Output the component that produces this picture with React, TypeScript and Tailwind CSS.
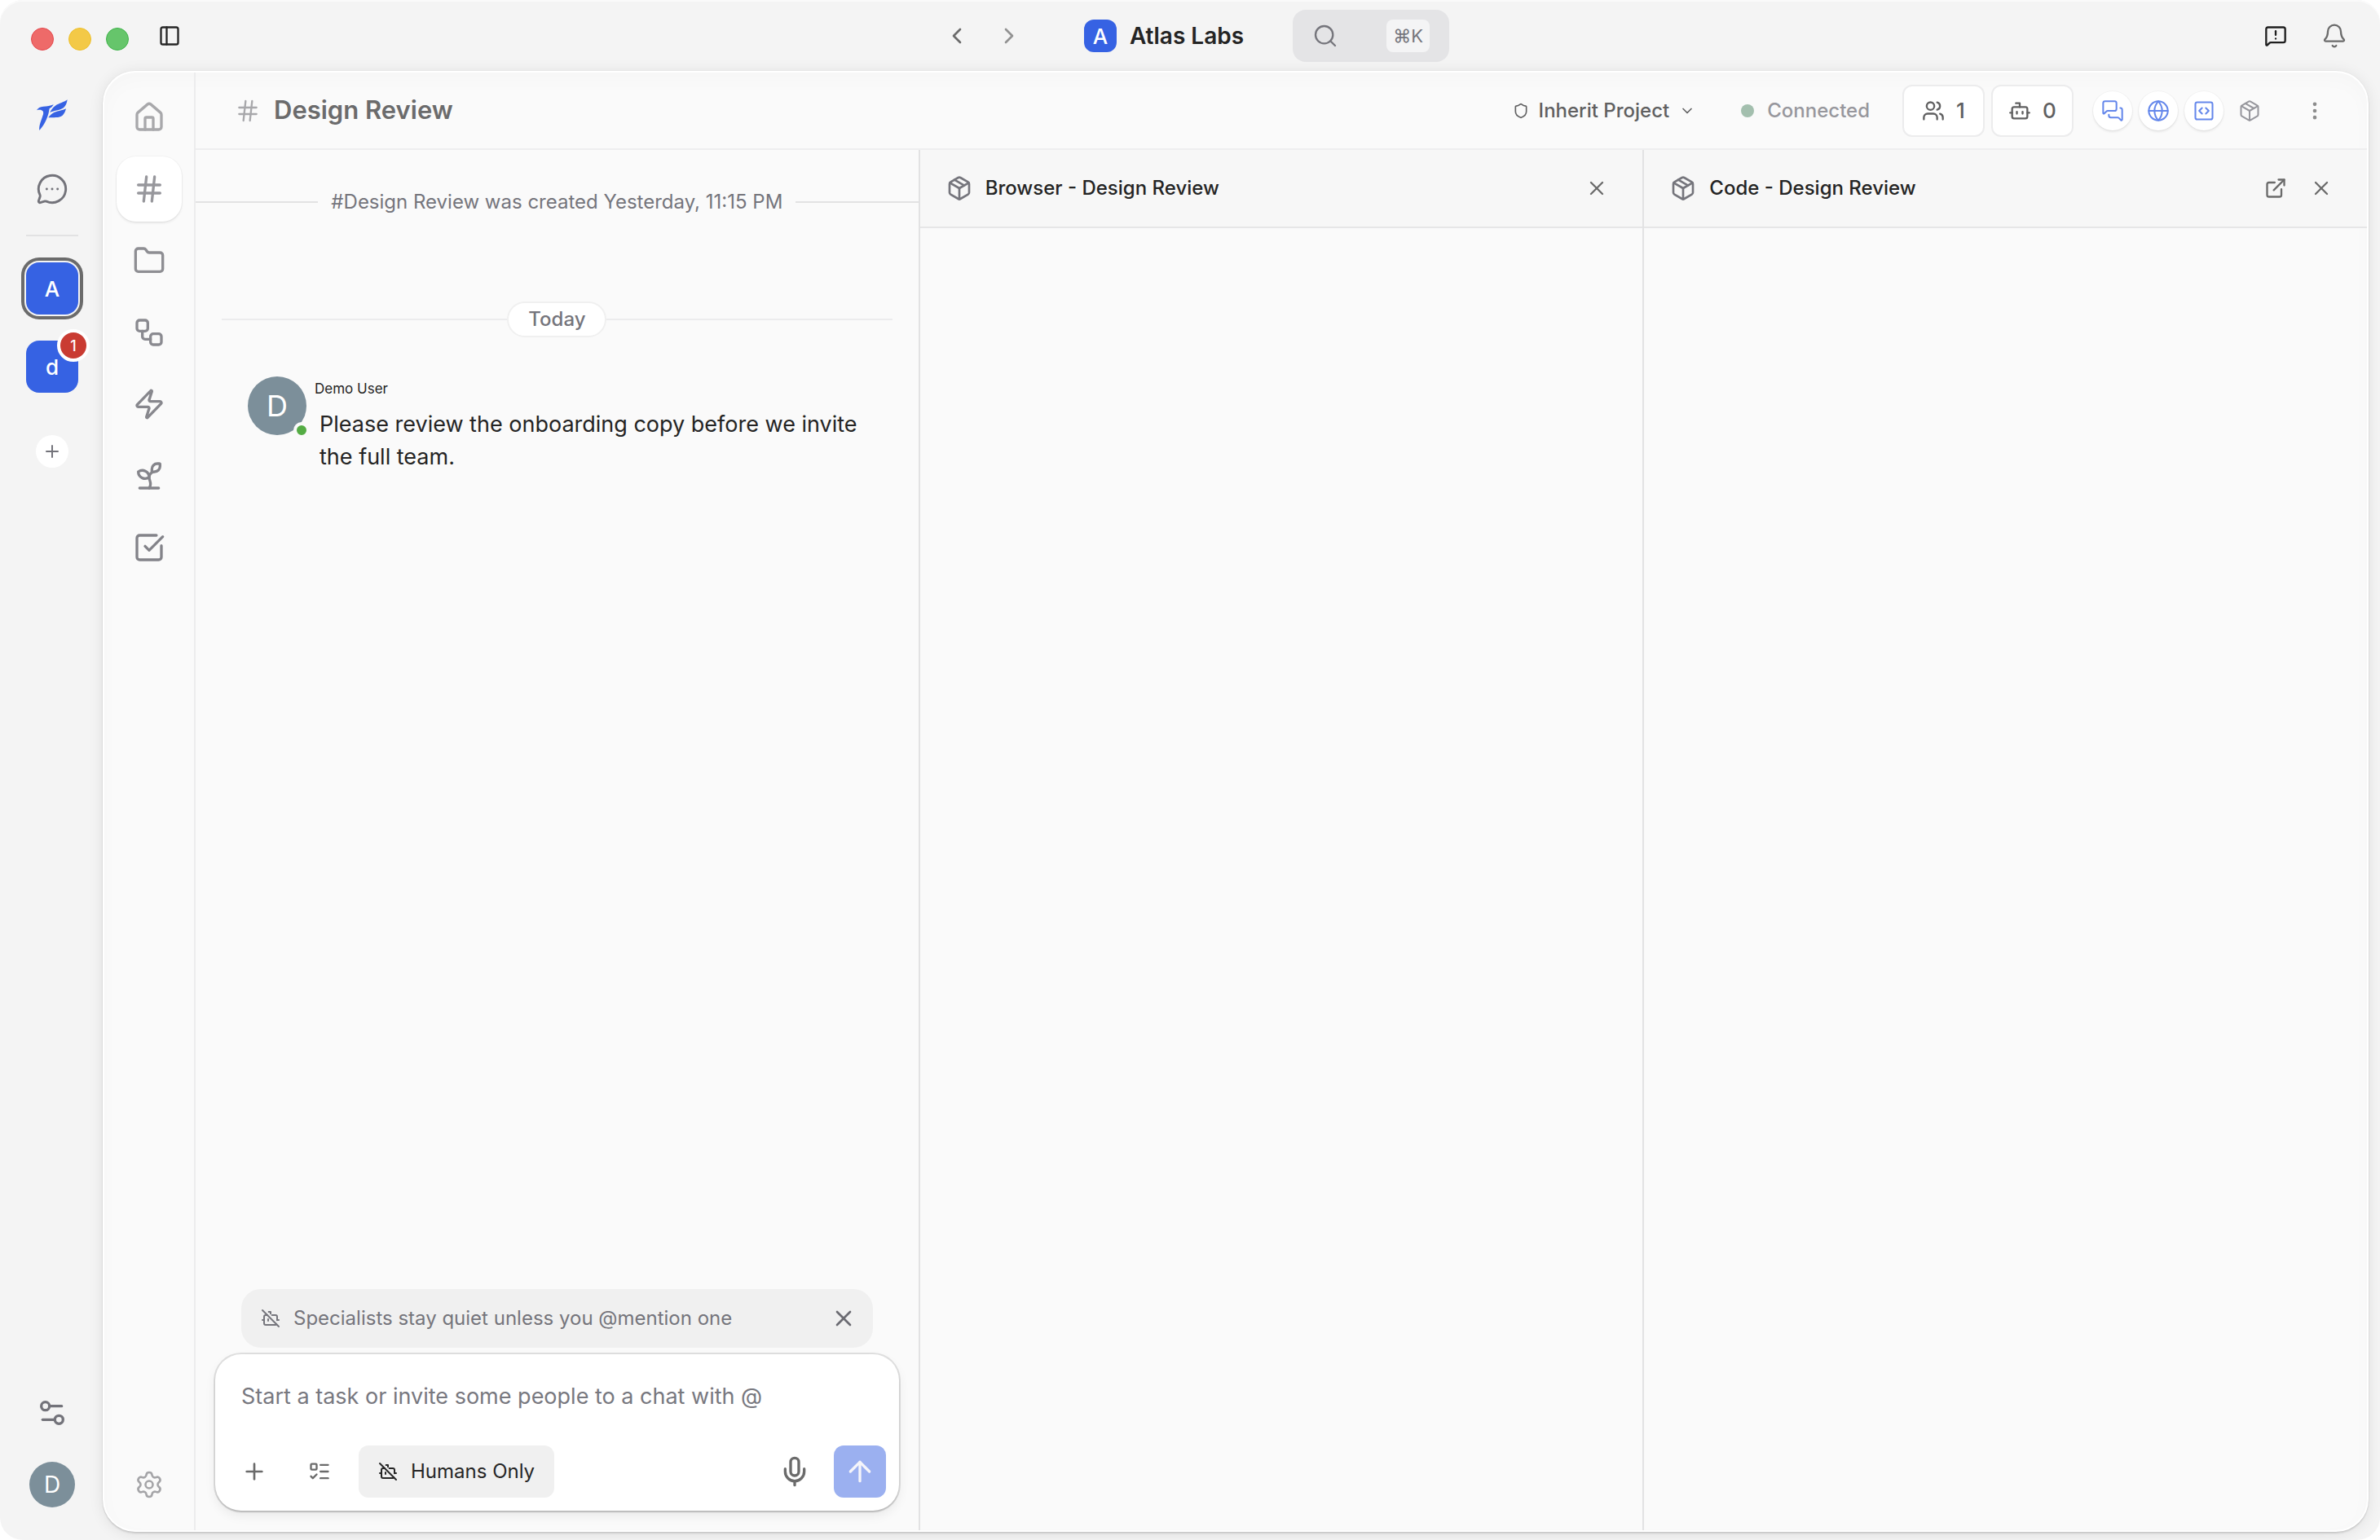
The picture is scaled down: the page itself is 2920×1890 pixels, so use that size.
import React from 'react';
import {
  ArrowUp,
  Bell,
  Bot,
  BotOff,
  ChevronDown,
  ChevronLeft,
  ChevronRight,
  EllipsisVertical,
  ExternalLink,
  Folder,
  Globe,
  Hash,
  House,
  ListTodo,
  MessageCircleMore,
  MessageSquareWarning,
  MessagesSquare,
  Mic,
  Package,
  PanelLeft,
  Plus,
  Search,
  Settings,
  Settings2,
  Shield,
  Sprout,
  SquareCheckBig,
  SquareCode,
  Users,
  Workflow,
  X,
  Zap,
} from 'lucide-react';

const Logo: React.FC = () => (
  <svg viewBox="76 64 120 120" className="size-10" fill="#3662e3" aria-hidden="true">
    <path d="M79 107C84 98 92 94 104 93C118 93 130 91 141 86C138 93 132 98 126 101C123 125 112 157 89 181C86 165 97 142 103 122C106 110 98 102 79 107Z" />
    <path d="M192 68C182 76 160 82 148 90C138 97 132 106 127 116C140 108 165 108 178 98C186 91 190 80 192 68Z" />
    <path d="M187 101C176 108 150 110 138 118C132 122 127 127 122 134C140 132 162 136 174 126C181 119 185 110 187 101Z" />
  </svg>
);

const TitleBar: React.FC = () => (
  <header className="grid h-[87px] grid-cols-[1fr_auto_1fr] items-center pt-px">
    <div className="flex items-center pl-[38px]">
      <div className="flex gap-[18px] pt-2">
        <button aria-label="Close window" className="size-7 rounded-full border border-[#e5484d] bg-[#ee6a69]" />
        <button aria-label="Minimize window" className="size-7 rounded-full border border-[#eebf28] bg-[#f3c947]" />
        <button aria-label="Zoom window" className="size-7 rounded-full border border-[#3fb44a] bg-[#66c56b]" />
      </div>
      <button aria-label="Toggle sidebar" className="ml-9 text-[#262626]">
        <PanelLeft className="size-7" strokeWidth={2} />
      </button>
    </div>

    <div className="flex items-center">
      <button aria-label="Back" className="flex size-16 items-center justify-center text-[#6b6b6b]">
        <ChevronLeft className="size-8" strokeWidth={2} />
      </button>
      <button aria-label="Forward" className="flex size-16 items-center justify-center text-[#929292]">
        <ChevronRight className="size-8" strokeWidth={2} />
      </button>
      <div className="mx-[60px] flex items-center gap-4">
        <span className="flex size-10 items-center justify-center rounded-xl bg-[#3662e3] text-[26px] font-medium text-white">
          A
        </span>
        <span className="text-[28px] font-semibold text-[#242424]">Atlas Labs</span>
      </div>
      <button
        aria-label="Search"
        className="flex h-16 w-48 items-center justify-between rounded-2xl bg-[#e4e4e6] px-6 text-[#75757c]"
      >
        <Search className="size-8" strokeWidth={1.75} />
        <kbd className="flex h-10 items-center rounded-lg bg-[#f4f4f5] px-2 font-['Inter',sans-serif] text-[22px]">⌘K</kbd>
      </button>
    </div>

    <div className="flex items-center justify-end gap-[42px] pr-10">
      <button aria-label="Send feedback" className="text-[#1f1f1f]">
        <MessageSquareWarning className="size-7" strokeWidth={2} />
      </button>
      <button aria-label="Notifications" className="text-[#6b6b6b]">
        <Bell className="size-8" strokeWidth={1.75} />
      </button>
    </div>
  </header>
);

const WorkspaceRail: React.FC = () => (
  <aside className="flex w-[126px] shrink-0 flex-col items-center pt-[34px] pb-10 pl-[2px]">
    <Logo />
    <button aria-label="Direct messages" className="mt-[51px] text-[#73737a]">
      <MessageCircleMore className="size-10" strokeWidth={1.75} />
    </button>
    <div className="mt-9 h-[2px] w-16 bg-[#e2e2e3]" />
    <button
      aria-label="Atlas Labs workspace"
      className="mt-8 flex size-16 items-center justify-center rounded-2xl bg-[#3662e3] text-[26px] font-medium text-white ring-4 ring-[#6b6b6b] ring-offset-2 ring-offset-[#f4f4f4]"
    >
      A
    </button>
    <button
      aria-label="demo workspace, 1 unread"
      className="relative mt-8 flex size-16 items-center justify-center rounded-2xl bg-[#3662e3] text-[26px] font-medium text-white"
    >
      d
      <span className="absolute -top-[14px] -right-[14px] flex size-10 items-center justify-center rounded-full border-4 border-white bg-[#c93b32] text-[18px] font-medium">
        1
      </span>
    </button>
    <button aria-label="Add workspace" className="mt-[52px] flex size-10 items-center justify-center rounded-full bg-white text-[#73737a]">
      <Plus className="size-6" strokeWidth={2} />
    </button>
    <button aria-label="Preferences" className="mt-auto text-[#73737a]">
      <Settings2 className="size-10" strokeWidth={2} />
    </button>
    <button aria-label="Account" className="mt-10 flex size-14 items-center justify-center rounded-full bg-[#7c8f9a] text-[28px] text-white">
      D
    </button>
  </aside>
);

const navItems = [
  { label: 'Home', icon: House, tone: 'text-[#a8a8ab]' },
  { label: 'Channels', icon: Hash, tone: 'text-[#97979c]', active: true },
  { label: 'Files', icon: Folder, tone: 'text-[#8e8e93]' },
  { label: 'Workflows', icon: Workflow, tone: 'text-[#8a8a90]' },
  { label: 'Automations', icon: Zap, tone: 'text-[#87878d]' },
  { label: 'Growth', icon: Sprout, tone: 'text-[#85858b]' },
  { label: 'Tasks', icon: SquareCheckBig, tone: 'text-[#838389]' },
];

const ProjectNav: React.FC = () => (
  <nav className="flex w-28 shrink-0 flex-col items-center gap-2 border-r-2 border-[#ececed] pt-[15px] pb-[16px]">
    {navItems.map(({ label, icon: Icon, tone, active }) => (
      <button
        key={label}
        aria-label={label}
        className={`flex size-20 items-center justify-center rounded-3xl ${tone} ${
          active ? 'bg-white shadow-[0_0_0_1px_rgba(0,0,0,0.03),0_2px_3px_rgba(0,0,0,0.08)]' : ''
        }`}
      >
        <Icon className="size-10" strokeWidth={2} />
      </button>
    ))}
    <button aria-label="Project settings" className="mt-auto flex size-20 items-center justify-center text-[#a5a5a8]">
      <Settings className="size-9" strokeWidth={1.75} />
    </button>
  </nav>
);

const viewToggles = [
  { label: 'Chat', icon: MessagesSquare, on: true },
  { label: 'Browser', icon: Globe, on: true },
  { label: 'Code', icon: SquareCode, on: true },
  { label: 'Artifacts', icon: Package, on: false },
];

const ChannelHeader: React.FC = () => (
  <div className="flex h-[95px] items-center border-b-2 border-[#eeeeef] pr-[50px] pl-12">
    <Hash className="size-8 text-[#a8a8ab]" strokeWidth={1.75} />
    <h1 className="ml-4 text-[31px] font-semibold text-[#6b6b6c]">Design Review</h1>

    <button className="ml-auto flex items-center text-[24px] font-medium text-[#606061]">
      <Shield className="size-5" strokeWidth={2} />
      <span className="ml-3">Inherit Project</span>
      <ChevronDown className="ml-3 size-5" strokeWidth={2} />
    </button>
    <div className="ml-14 flex items-center gap-4 text-[24px] font-medium text-[#97979d]">
      <span className="size-4 rounded-full bg-[#a3bfae]" />
      Connected
    </div>
    <div className="ml-10 flex gap-2 text-[26px] font-medium text-[#606061]">
      <button aria-label="Members" className="flex h-16 w-[101px] items-center justify-center gap-[14px] rounded-xl border-2 border-[#ececed] bg-white">
        <Users className="size-7" strokeWidth={2} />1
      </button>
      <button aria-label="Agents" className="flex h-16 w-[101px] items-center justify-center gap-[14px] rounded-xl border-2 border-[#ececed] bg-white">
        <Bot className="size-7" strokeWidth={2} />0
      </button>
    </div>
    <div className="ml-6 flex gap-2">
      {viewToggles.map(({ label, icon: Icon, on }) => (
        <button
          key={label}
          aria-label={label}
          className={`flex size-12 items-center justify-center rounded-full ${
            on
              ? 'bg-white text-[#6487eb] shadow-[0_0_0_1px_rgba(0,0,0,0.03),0_2px_3px_rgba(0,0,0,0.08)]'
              : 'text-[#97979d]'
          }`}
        >
          <Icon className="size-7" strokeWidth={1.75} />
        </button>
      ))}
    </div>
    <button aria-label="More options" className="ml-[42px] text-[#8c8c8c]">
      <EllipsisVertical className="size-7" strokeWidth={2} />
    </button>
  </div>
);

const ChatColumn: React.FC = () => (
  <section className="flex min-w-0 flex-1 flex-col">
    <div className="mt-11 flex items-center gap-4 text-[24px] leading-10 text-[#75757c]">
      <div className="h-[2px] flex-1 bg-[#e2e2e3]" />
      <span>#Design Review was created Yesterday, 11:15 PM</span>
      <div className="h-[2px] flex-1 bg-[#e2e2e3]" />
    </div>

    <div className="mx-8 mt-[102px] flex items-center">
      <div className="h-[2px] flex-1 bg-[#ececed]" />
      <span className="flex h-11 items-center rounded-3xl border-2 border-[#f0f0f0] bg-white px-6 text-[24px] font-medium text-[#75757c]">
        Today
      </span>
      <div className="h-[2px] flex-1 bg-[#ececed]" />
    </div>

    <article className="mt-12 flex pr-[52px] pl-16">
      <div className="relative flex size-[72px] shrink-0 items-center justify-center rounded-full bg-[#7c8f9a] text-[36px] text-white">
        D
        <span className="absolute -right-1 -bottom-1 size-5 rounded-full border-4 border-[#fafafa] bg-[#54ac44]" />
      </div>
      <div className="min-w-0 pt-[3px]">
        <div className="pl-[10px] text-[17px] leading-6 text-[#242424]">Demo User</div>
        <p className="mt-3 pl-4 text-[27px] leading-10 text-[#242424]">
          Please review the onboarding copy before we invite the full team.
        </p>
      </div>
    </article>

    <div className="mx-14 mt-auto flex h-[72px] items-center rounded-3xl bg-[#f0f0f0] pr-5 pl-6 text-[24px] text-[#75757c]">
      <BotOff className="size-6" strokeWidth={2} />
      <span className="ml-4">Specialists stay quiet unless you @mention one</span>
      <button aria-label="Dismiss" className="ml-auto text-[#6b6b72]">
        <X className="size-8" strokeWidth={2} />
      </button>
    </div>

    <form
      className="mx-6 mt-2 mb-6 rounded-[32px] bg-white p-4 shadow-[0_0_0_2px_rgba(0,0,0,0.1),0_2px_2px_rgba(0,0,0,0.12),0_6px_14px_rgba(0,0,0,0.07)]"
      onSubmit={(e) => e.preventDefault()}
    >
      <textarea
        aria-label="Message"
        rows={1}
        placeholder="Start a task or invite some people to a chat with @"
        className="block h-24 w-full resize-none bg-transparent px-4 pt-4 text-[27px] leading-10 text-[#242424] outline-none placeholder:text-[#78787f]"
      />
      <div className="flex items-center gap-4 text-[#6b6b6b]">
        <button type="button" aria-label="Attach" className="flex size-16 items-center justify-center">
          <Plus className="size-8" strokeWidth={2} />
        </button>
        <button type="button" aria-label="Task list" className="flex size-16 items-center justify-center">
          <ListTodo className="size-7" strokeWidth={2} />
        </button>
        <button type="button" className="flex h-16 items-center gap-4 rounded-xl bg-[#f0f0f0] px-6 text-[24px] text-[#262626]">
          <BotOff className="size-6" strokeWidth={2} />
          Humans Only
        </button>
        <button type="button" aria-label="Dictate" className="ml-auto flex size-16 items-center justify-center">
          <Mic className="size-10" strokeWidth={2} />
        </button>
        <button type="submit" aria-label="Send" className="flex size-16 items-center justify-center rounded-xl bg-[#9bb0f0] text-[#f5f5fa]">
          <ArrowUp className="size-10" strokeWidth={2} />
        </button>
      </div>
    </form>
  </section>
);

const SidePanel: React.FC<{ title: string; popOut?: boolean }> = ({ title, popOut }) => (
  <section className="min-w-0 flex-1">
    <div className="flex h-24 items-center border-b-2 border-[#e6e6e7] bg-[#f7f7f7] px-8">
      <Package className="size-8 text-[#75757c]" strokeWidth={2} />
      <h2 className="ml-4 text-[24px] font-medium text-[#242424]">{title}</h2>
      <div className="ml-auto flex gap-2 text-[#6b6b6b]">
        {popOut && (
          <button aria-label={`Open ${title} in a new window`} className="flex size-12 items-center justify-center">
            <ExternalLink className="size-7" strokeWidth={2} />
          </button>
        )}
        <button aria-label={`Close ${title}`} className="flex size-12 items-center justify-center">
          <X className="size-7" strokeWidth={2} />
        </button>
      </div>
    </div>
  </section>
);

export default function App() {
  return (
    <div className="min-h-screen bg-white">
      <div className="flex min-h-screen flex-col rounded-[28px] bg-[#f4f4f4] font-['Inter',sans-serif] shadow-[inset_0_2px_0_#fafafa]">
        <TitleBar />
        <div className="flex flex-1">
          <WorkspaceRail />
          <main className="mr-[14px] mb-[10px] flex min-w-0 flex-1 rounded-[40px] border-2 border-white bg-[#fafafa] shadow-[0_0_0_1px_rgba(0,0,0,0.02),0_2px_2px_rgba(0,0,0,0.12),0_2px_18px_rgba(0,0,0,0.09),inset_0_8px_24px_rgba(0,0,0,0.02)]">
            <ProjectNav />
            <div className="flex min-w-0 flex-1 flex-col">
              <ChannelHeader />
              <div className="flex flex-1">
                <ChatColumn />
                <div className="w-[2px] bg-[#e2e2e3]" />
                <SidePanel title="Browser - Design Review" />
                <div className="w-[2px] bg-[#e2e2e3]" />
                <SidePanel title="Code - Design Review" popOut />
              </div>
            </div>
          </main>
        </div>
      </div>
    </div>
  );
}
